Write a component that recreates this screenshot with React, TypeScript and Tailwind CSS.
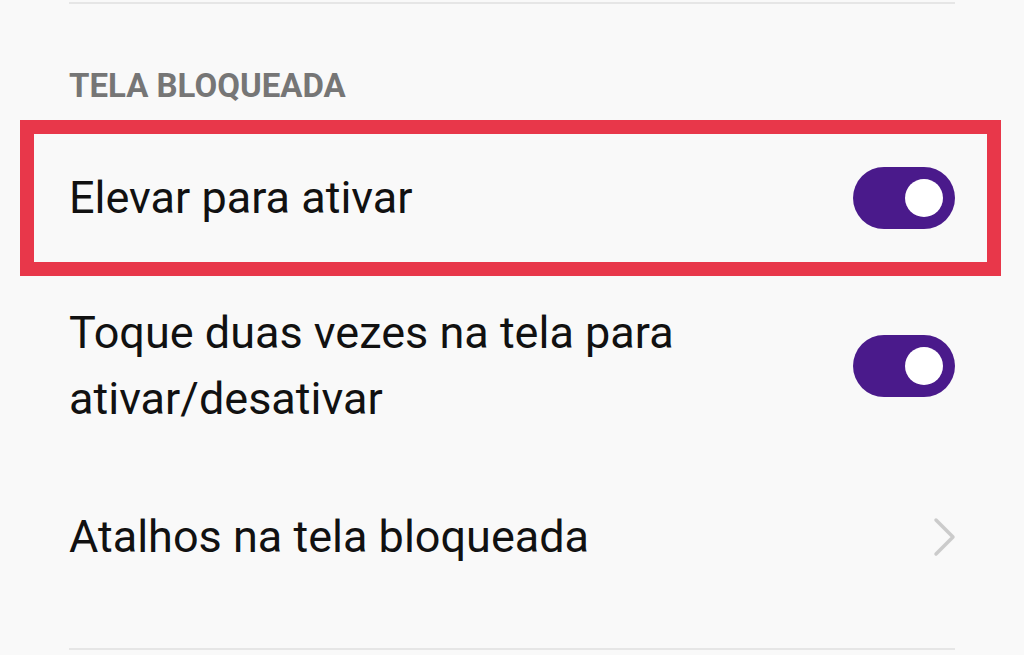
import React from "react";

function Toggle() {
  return (
    <div className="flex h-[62px] w-[102px] shrink-0 items-center justify-end rounded-full bg-[#4a1a8b] pr-[12px]">
      <div className="h-[38px] w-[38px] rounded-full bg-white" />
    </div>
  );
}

function Chevron() {
  return (
    <svg width="26" height="40" viewBox="0 0 26 40" className="shrink-0">
      <path d="M4 3 L21 20 L4 37" fill="none" stroke="#cbcbcb" strokeWidth="3.5" strokeLinecap="round" strokeLinejoin="round" />
    </svg>
  );
}

export default function App() {
  return (
    <div className="relative h-[655px] w-[1024px] overflow-hidden bg-[#f9f9f9] font-['Roboto',sans-serif] text-[#111]">
      <div className="pt-[2px]">
        <div className="mx-[69px] h-[2px] bg-[#e6e6e6]" />
      </div>

      <div className="flex h-[116px] items-end px-[69px] pb-[14px]">
        <span className="text-[33px] font-bold leading-[40px] text-[#767676]">TELA BLOQUEADA</span>
      </div>

      <div className="ml-[20px] w-[981px] border-[14px] border-[#e8374a]">
        <div className="flex h-[128px] items-center justify-between pl-[35px] pr-[32px]">
          <span className="text-[45px] leading-[54px]">Elevar para ativar</span>
          <Toggle />
        </div>
      </div>

      <div className="flex h-[180px] items-center justify-between px-[69px]">
        <span className="text-[45px] leading-[66px]">
          Toque duas vezes na tela para
          <br />
          ativar/desativar
        </span>
        <Toggle />
      </div>

      <div className="flex h-[162px] items-center justify-between pl-[69px] pr-[66px]">
        <span className="text-[45px] leading-[54px]">Atalhos na tela bloqueada</span>
        <Chevron />
      </div>

      <div className="mt-[30px] mx-[69px] h-[2px] bg-[#e6e6e6]" />
    </div>
  );
}
